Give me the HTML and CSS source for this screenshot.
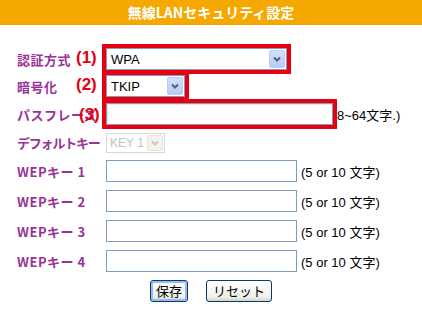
FILE: index.html
```html
<!DOCTYPE html>
<html lang="ja">
<head>
    <meta charset="UTF-8">
    <title>無線LANセキュリティ設定</title>
    <link rel="stylesheet" href="styles.css">
</head>
<body>
    <h1 class="title">無線LANセキュリティ設定</h1>

    <form class="settings">
        <div class="row row-first">
            <label class="label" for="auth">認証方式</label>
            <span class="mark">(1)</span>
            <div class="mark-box">
                <div class="select select-auth">
                    <select id="auth">
                        <option>WPA</option>
                        <option>WPA2</option>
                        <option>WEP</option>
                    </select>
                    <span class="arrow"><svg width="8" height="6" viewBox="0 0 8 6"><path d="M1 1.5 L4 4.5 L7 1.5" fill="none" stroke="#4d6185" stroke-width="2"/></svg></span>
                </div>
            </div>
        </div>

        <div class="row row-second">
            <label class="label" for="cipher">暗号化</label>
            <span class="mark">(2)</span>
            <div class="mark-box">
                <div class="select select-cipher">
                    <select id="cipher">
                        <option>TKIP</option>
                        <option>AES</option>
                    </select>
                    <span class="arrow"><svg width="8" height="6" viewBox="0 0 8 6"><path d="M1 1.5 L4 4.5 L7 1.5" fill="none" stroke="#4d6185" stroke-width="2"/></svg></span>
                </div>
            </div>
        </div>

        <div class="row row-third">
            <label class="label" for="pass">パスフレーズ</label>
            <span class="mark mark-pass">(3)</span>
            <div class="mark-box">
                <input type="text" id="pass" class="text text-pass">
            </div>
            <span class="hint hint-pass">8~64文字.)</span>
        </div>

        <div class="row row-key">
            <label class="label label-narrow" for="defkey">デフォルトキー</label>
            <div class="select select-key field">
                <select id="defkey" disabled>
                    <option>KEY 1</option>
                </select>
                <span class="arrow arrow-off"><svg width="8" height="6" viewBox="0 0 8 6"><path d="M1 1.5 L4 4.5 L7 1.5" fill="none" stroke="#c9c7ba" stroke-width="2"/></svg></span>
            </div>
        </div>

        <div class="row row-wep">
            <label class="label" for="wep1">WEPキー 1</label>
            <input type="text" id="wep1" class="text text-wep field">
            <span class="hint">(5 or 10 文字)</span>
        </div>
        <div class="row row-wep">
            <label class="label" for="wep2">WEPキー 2</label>
            <input type="text" id="wep2" class="text text-wep field">
            <span class="hint">(5 or 10 文字)</span>
        </div>
        <div class="row row-wep">
            <label class="label" for="wep3">WEPキー 3</label>
            <input type="text" id="wep3" class="text text-wep field">
            <span class="hint">(5 or 10 文字)</span>
        </div>
        <div class="row row-wep">
            <label class="label" for="wep4">WEPキー 4</label>
            <input type="text" id="wep4" class="text text-wep field">
            <span class="hint">(5 or 10 文字)</span>
        </div>

        <div class="buttons">
            <button type="submit" class="btn btn-default">保存</button>
            <button type="reset" class="btn">リセット</button>
        </div>
    </form>
</body>
</html>
```

FILE: styles.css
```css
:root {
    --orange: #f5a800;
    --purple: #993399;
    --red: #e60012;
    --field-border: #7f9db9;
}

* {
    margin: 0;
    padding: 0;
    box-sizing: border-box;
}

body {
    background: #ffffff;
    font-family: "Liberation Sans", "Noto Sans CJK JP", sans-serif;
    font-size: 13px;
    color: #000000;
}

.title {
    height: 25px;
    line-height: 25px;
    background: var(--orange);
    color: #ffffff;
    text-align: center;
    font-family: "Noto Sans CJK JP", sans-serif;
    font-size: 14px;
    font-weight: bold;
}

.settings {
    padding-top: 19px;
}

.row {
    position: relative;
    display: flex;
    align-items: center;
    padding-left: 17px;
}

.row-first { height: 30px; }
.row-second { height: 30px; margin-top: -3px; }
.row-third { height: 30px; margin-top: -2px; }
.row-key { height: 27px; }
.row-wep { height: 30px; }

.label {
    width: 85px;
    flex-shrink: 0;
    color: var(--purple);
    font-family: "Noto Sans CJK JP", sans-serif;
    font-size: 13px;
    font-weight: bold;
    letter-spacing: 0.5px;
    white-space: nowrap;
}

.label-narrow {
    letter-spacing: -1.2px;
}

/* (1)(2)(3) annotations drawn over the form */
.mark {
    position: absolute;
    left: 76px;
    top: 5px;
    color: var(--red);
    font-family: "Liberation Sans", sans-serif;
    font-size: 17px;
    font-weight: bold;
    line-height: 18px;
}

.mark-pass {
    left: 79px;
    top: 7px;
}

.mark-box {
    border: 4px solid var(--red);
    flex-shrink: 0;
}

.field {
    margin-left: 4px;
}

.select {
    position: relative;
    flex-shrink: 0;
}

.select select {
    appearance: none;
    -webkit-appearance: none;
    display: block;
    width: 100%;
    height: 22px;
    padding-left: 4px;
    border: 1px solid var(--field-border);
    background: #ffffff;
    font-family: "Liberation Sans", sans-serif;
    font-size: 13px;
    color: #000000;
    outline: none;
}

.select-auth { width: 181px; }
.select-cipher { width: 79px; }

.select-key { width: 59px; }

.select-key select {
    height: 20px;
    padding-left: 3px;
    border-color: #c9c7ba;
    color: #aca899;
    background: #ffffff;
    font-size: 12px;
}

.arrow {
    position: absolute;
    top: 2px;
    right: 2px;
    width: 16px;
    height: 18px;
    display: flex;
    align-items: center;
    justify-content: center;
    border: 1px solid #b9cdf7;
    border-radius: 2px;
    background: linear-gradient(#d2e0fd, #b7cbf7);
    pointer-events: none;
}

.arrow-off {
    top: 2px;
    height: 16px;
    border-color: #e4e2da;
    background: #f4f3ee;
}

.text {
    height: 22px;
    border: 1px solid var(--field-border);
    background: #ffffff;
    font-family: "Liberation Sans", sans-serif;
    font-size: 13px;
    padding: 0 3px;
    outline: none;
    flex-shrink: 0;
}

.text-pass {
    display: block;
    width: 227px;
    box-shadow: inset 1px 1px 0 #e6e6e6;
}

.text-wep {
    width: 191px;
}

.hint {
    margin-left: 4px;
    white-space: nowrap;
    font-family: "Liberation Sans", "Noto Sans CJK JP", sans-serif;
    font-size: 13px;
}

.hint-pass {
    margin-left: 0;
}

.buttons {
    height: 30px;
    display: flex;
    justify-content: center;
    align-items: center;
    gap: 18px;
}

.btn {
    height: 22px;
    padding: 0 6px;
    border: 1px solid #003c74;
    border-radius: 3px;
    background: linear-gradient(#ffffff, #f0efea 80%, #d8d2c6);
    font-family: "Noto Sans CJK JP", sans-serif;
    font-size: 13px;
    line-height: 18px;
    color: #000000;
    cursor: pointer;
}

.btn-default {
    box-shadow: inset 0 0 0 2px #9bbbf0;
    padding: 0 5px;
}
```
